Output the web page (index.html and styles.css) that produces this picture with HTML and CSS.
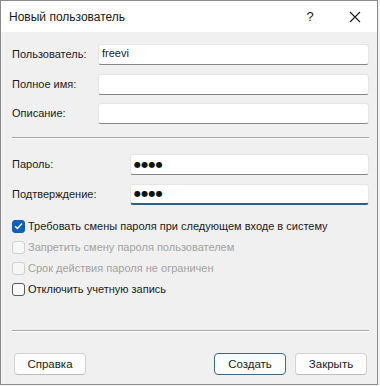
FILE: index.html
```html
<!DOCTYPE html>
<html lang="ru">
<head>
<meta charset="utf-8">
<title>Новый пользователь</title>
<link rel="stylesheet" href="styles.css">
</head>
<body>
<div class="window">
  <div class="titlebar">
    <span class="title">Новый пользователь</span>
    <span class="tb-help">?</span>
    <span class="tb-close">
      <svg width="12" height="12" viewBox="0 0 12 12"><path d="M1 1 L11 11 M11 1 L1 11" stroke="#1a1a1a" stroke-width="1.1" fill="none"/></svg>
    </span>
  </div>
  <div class="content">
    <div class="grid grid-user">
      <label class="lbl">Пользователь:</label>
      <div class="input"><span class="val">freevi</span></div>
      <label class="lbl">Полное имя:</label>
      <div class="input"></div>
      <label class="lbl">Описание:</label>
      <div class="input"></div>
    </div>
    <div class="sep sep1"></div>
    <div class="grid grid-pass">
      <label class="lbl">Пароль:</label>
      <div class="input"><span class="dots">●●●●</span></div>
      <label class="lbl">Подтверждение:</label>
      <div class="input focused"><span class="dots">●●●●</span></div>
    </div>
    <div class="checks">
      <div class="chk-row"><span class="box checked"><svg width="9" height="8" viewBox="0 0 9 8"><path d="M1 4.2 L3.4 6.5 L8 1.5" stroke="#fff" stroke-width="1.4" fill="none"/></svg></span><span class="chk-text">Требовать смены пароля при следующем входе в систему</span></div>
      <div class="chk-row disabled"><span class="box"></span><span class="chk-text">Запретить смену пароля пользователем</span></div>
      <div class="chk-row disabled"><span class="box"></span><span class="chk-text">Срок действия пароля не ограничен</span></div>
      <div class="chk-row"><span class="box"></span><span class="chk-text">Отключить учетную запись</span></div>
    </div>
    <div class="sep sep2"></div>
    <div class="buttons">
      <button class="btn">Справка</button>
      <div class="spacer"></div>
      <button class="btn default">Создать</button>
      <button class="btn">Закрыть</button>
    </div>
  </div>
</div>
</body>
</html>
```
FILE: styles.css
```css
html, body {
  margin: 0;
  padding: 0;
  background: #f3f3f3;
}
body {
  font-family: "Liberation Sans", Arial, sans-serif;
  font-size: 11px;
  color: #1a1a1a;
}
.window {
  width: 376px;
  height: 383px;
  border: 1px solid #8c8c8c;
  background: #f0f0f0;
  display: flex;
  flex-direction: column;
}
.titlebar {
  height: 31px;
  background: #ffffff;
  display: flex;
  align-items: center;
  padding-left: 8px;
  flex-shrink: 0;
}
.title {
  flex: 1;
  font-size: 12px;
}
.tb-help {
  width: 20px;
  text-align: center;
  margin-right: 25px;
  font-size: 13px;
}
.tb-close {
  width: 20px;
  display: flex;
  justify-content: center;
  margin-right: 12px;
}
.content {
  padding: 12px 8px 0 11px;
  display: flex;
  flex-direction: column;
}
.grid {
  display: grid;
  row-gap: 8.5px;
  align-items: center;
}
.grid-user {
  grid-template-columns: 86px 1fr;
  grid-auto-rows: 21px;
}
.grid-pass {
  grid-template-columns: 118px 1fr;
  grid-auto-rows: 21px;
  margin-top: 15px;
}
.lbl {
  line-height: 21px;
  white-space: nowrap;
}
.input {
  height: 21px;
  box-sizing: border-box;
  background: #ffffff;
  border: 1px solid #e6e6e6;
  border-bottom: 1px solid #868686;
  border-radius: 3px;
  display: flex;
  align-items: center;
  padding-left: 3px;
}
.input.focused {
  border-bottom: 2px solid #2f5f84;
}
.val {
  font-size: 11px;
  line-height: 1;
  margin-top: -3px;
}
.dots {
  font-family: "DejaVu Sans", sans-serif;
  font-size: 8px;
  letter-spacing: 0.3px;
  color: #111;
  margin-top: -1px;
}
.sep {
  height: 0;
  border-top: 1px solid #a6a6a6;
  border-bottom: 1px solid #ffffff;
}
.sep1 {
  margin-top: 13px;
}
.checks {
  margin-top: 11px;
  display: flex;
  flex-direction: column;
}
.chk-row {
  height: 21px;
  display: flex;
  align-items: center;
}
.box {
  width: 13px;
  height: 13px;
  box-sizing: border-box;
  border: 1px solid #5a5a5a;
  border-radius: 3px;
  background: #fbfbfb;
  margin-right: 3px;
  display: flex;
  align-items: center;
  justify-content: center;
}
.box.checked {
  background: #0f5ec0;
  border-color: #0f5ec0;
}
.disabled .box {
  border-color: #d0d0d0;
  background: #f6f6f6;
}
.disabled .chk-text {
  color: #a2a2a2;
}
.sep2 {
  margin-top: 30px;
}
.buttons {
  margin-top: 21px;
  display: flex;
  align-items: center;
  gap: 9px;
  padding-left: 2px;
  padding-right: 2px;
}
.spacer {
  flex: 1;
}
.btn {
  width: 72px;
  height: 22px;
  box-sizing: border-box;
  font-family: "Liberation Sans", Arial, sans-serif;
  font-size: 11.5px;
  color: #1a1a1a;
  background: #fdfdfd;
  border: 1px solid #d2d2d2;
  border-bottom-color: #bdbdbd;
  border-radius: 4px;
  padding: 0;
}
.btn.default {
  border: 1px solid #3c6a8c;
  background: #fbfdfe;
}
```
